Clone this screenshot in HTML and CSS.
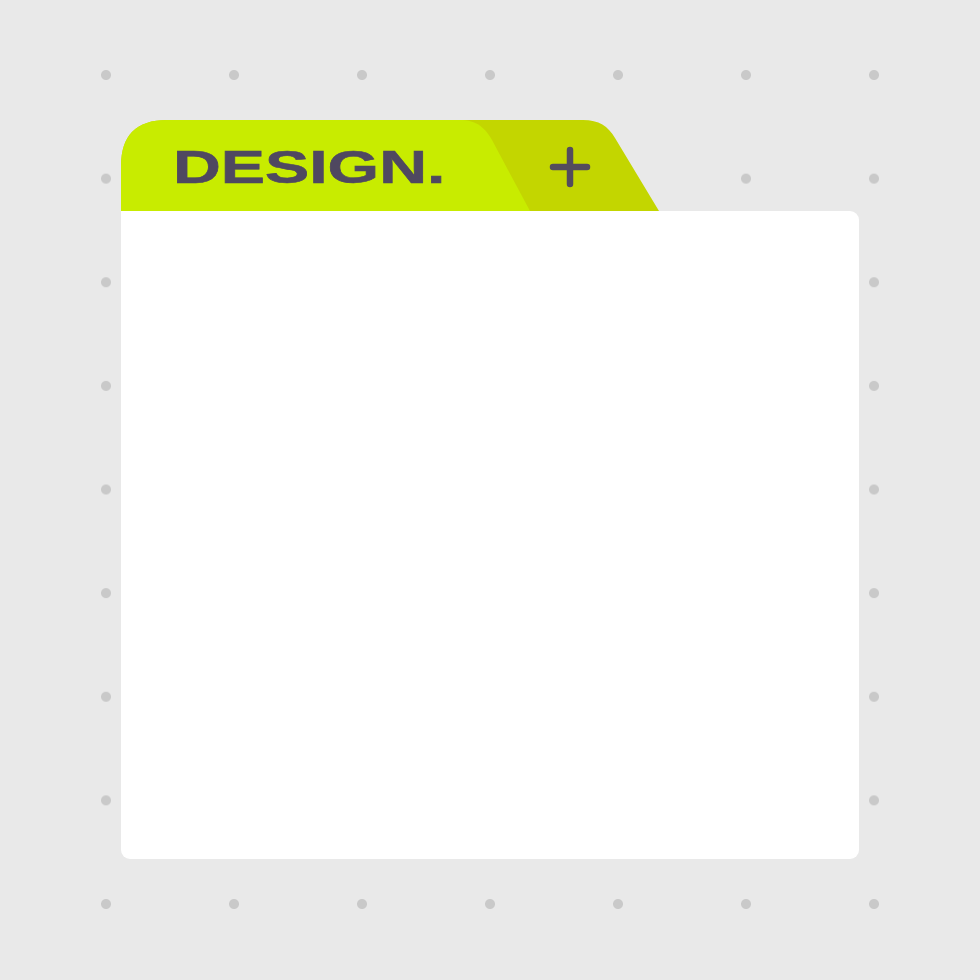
FILE: index.html
```html
<!DOCTYPE html>
<html>
<head>
<meta charset="utf-8">
<link rel="stylesheet" href="styles.css">
</head>
<body>
<div class="page">
  <div class="window">
    <div class="tab">
      <svg class="tab-bg" width="538" height="91" viewBox="0 0 538 91">
        <path d="M0,91 L0,46 Q0,0 46,0 L462,0 C478,0 487,6 494,18 L538,91 Z" fill="#c3d600"/>
        <path d="M0,91 L0,46 Q0,0 46,0 L339,0 C356,0 364,8 371,20 L409,91 Z" fill="#c8ec00"/>
      </svg>
      <span class="tab-title">DESIGN.</span>
      <svg class="tab-plus" width="46" height="46" viewBox="0 0 46 46">
        <path d="M23,6 V40 M6,23 H40" stroke="#534c5d" stroke-width="6.5" stroke-linecap="round" fill="none"/>
      </svg>
    </div>
    <div class="card"></div>
  </div>
</div>
</body>
</html>
```
FILE: styles.css
```css
html, body {
  margin: 0;
  padding: 0;
}
body {
  width: 980px;
  height: 980px;
  background-color: #e9e9e9;
  background-image: radial-gradient(circle at center, #c9c9c9 0, #c9c9c9 4.5px, rgba(201,201,201,0) 5.5px);
  background-size: 128px 103.625px;
  background-position: 42px 23.2px;
  font-family: "Liberation Sans", Arial, sans-serif;
  overflow: hidden;
}
.page {
  padding: 120px 0 0 121px;
}
.window {
  width: 738px;
  display: flex;
  flex-direction: column;
}
.tab {
  position: relative;
  width: 538px;
  height: 91px;
  display: flex;
  align-items: center;
}
.tab-bg {
  position: absolute;
  left: 0;
  top: 0;
  display: block;
}
.tab-title {
  position: relative;
  margin-left: 52px;
  margin-top: 3px;
  font-size: 46px;
  font-weight: 700;
  color: #4f4860;
  transform: scaleX(1.44);
  transform-origin: left center;
  line-height: 1;
  -webkit-text-stroke: 0.6px #4f4860;
}
.tab-plus {
  position: absolute;
  left: 426px;
  top: 24px;
}
.card {
  height: 648px;
  background: #ffffff;
  border-radius: 0 9px 9px 9px;
}
```
